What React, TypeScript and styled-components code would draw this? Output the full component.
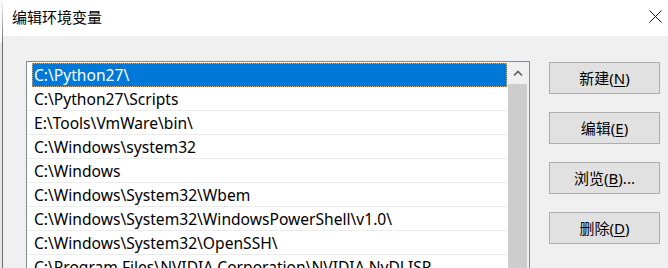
import * as React from 'react';
import styled, { createGlobalStyle } from 'styled-components';

const paths: string[] = [
	'C:\\Python27\\',
	'C:\\Python27\\Scripts',
	'E:\\Tools\\VmWare\\bin\\',
	'C:\\Windows\\system32',
	'C:\\Windows',
	'C:\\Windows\\System32\\Wbem',
	'C:\\Windows\\System32\\WindowsPowerShell\\v1.0\\',
	'C:\\Windows\\System32\\OpenSSH\\',
	'C:\\Program Files\\NVIDIA Corporation\\NVIDIA NvDLISR',
];

const buttons: Array<[string, string, string]> = [
	['新建(', 'N', ')'],
	['编辑(', 'E', ')'],
	['浏览(', 'B', ')...'],
	['删除(', 'D', ')'],
];

const App: React.FC = () => {
	return (
		<>
			<GlobalStyle />
			<Frame>
				<BackStrip />
				<Dialog>
					<TitleBar>
						<Title>编辑环境变量</Title>
						<svg width="13" height="13" viewBox="0 0 13 13">
							<path d="M0.5 0.5 L12.5 12.5 M12.5 0.5 L0.5 12.5" stroke="#111" strokeWidth="1" fill="none" />
						</svg>
					</TitleBar>
					<Body>
						<ListBox>
							<Rows>
								{paths.map((p, i) => (
									<Row key={p} $selected={i === 0}>{p}</Row>
								))}
							</Rows>
							<ScrollBar>
								<ArrowUp>
									<svg width="10" height="6" viewBox="0 0 10 6">
										<path d="M1 5.5 L5 1.5 L9 5.5" stroke="#606060" strokeWidth="1.6" fill="none" />
									</svg>
								</ArrowUp>
								<Thumb />
							</ScrollBar>
						</ListBox>
						<ButtonColumn>
							{buttons.map(([a, key, b]) => (
								<Button key={key}>
									{a}<u>{key}</u>{b}
								</Button>
							))}
						</ButtonColumn>
					</Body>
				</Dialog>
			</Frame>
		</>
	);
};

export default App;

const GlobalStyle = createGlobalStyle`
	html, body {
		margin: 0;
		padding: 0;
		overflow: hidden;
	}
	body {
		font-family: "Noto Sans", "Noto Sans CJK SC", sans-serif;
	}
`;

const Frame = styled.div`
	display: flex;
	width: 668px;
	height: 268px;
	overflow: hidden;
`;

const BackStrip = styled.div`
	width: 2px;
	flex-shrink: 0;
	background: #e6e6e6;
	border-right: 1px solid #6e6e6e;
	border-top: 43px solid #fafafa;
`;

const Dialog = styled.div`
	flex: 1;
	display: flex;
	flex-direction: column;
	min-width: 0;
`;

const TitleBar = styled.div`
	height: 36px;
	flex-shrink: 0;
	box-sizing: border-box;
	padding: 0 6px 3px 9px;
	background: #fff;
	display: flex;
	align-items: center;
	justify-content: space-between;
`;

const Title = styled.div`
	font-family: "Noto Sans CJK SC", sans-serif;
	font-size: 15px;
	color: #000;
`;

const Body = styled.div`
	flex: 1;
	display: flex;
	align-items: flex-start;
	gap: 19px;
	padding: 25px 0 0 23px;
	background: #f0f0f0;
	overflow: hidden;
`;

const ListBox = styled.div`
	width: 504px;
	height: 260px;
	flex-shrink: 0;
	box-sizing: border-box;
	display: flex;
	border: 1px solid #828790;
	background: #fff;
`;

const Rows = styled.div`
	flex: 1;
	padding: 1px 0 0 1px;
	overflow: hidden;
`;

const Row = styled.div<{ $selected?: boolean }>`
	height: 24px;
	box-sizing: border-box;
	display: flex;
	align-items: center;
	margin-left: ${(p) => (p.$selected ? '4px' : '0')};
	padding-left: ${(p) => (p.$selected ? '2px' : '6px')};
	border-bottom: 1px solid ${(p) => (p.$selected ? '#0078d7' : '#ececec')};
	background: ${(p) => (p.$selected ? '#0078d7' : '#fff')};
	color: ${(p) => (p.$selected ? '#fff' : '#000')};
	outline: ${(p) => (p.$selected ? '1px dotted #f0a050' : 'none')};
	outline-offset: -1px;
	font-family: "Noto Sans", "Noto Sans CJK SC", sans-serif;
	font-size: 15.6px;
	white-space: nowrap;
`;

const ScrollBar = styled.div`
	width: 21px;
	flex-shrink: 0;
	display: flex;
	flex-direction: column;
	background: #f0f0f0;
	margin-left: 1px;
`;

const ArrowUp = styled.div`
	height: 22px;
	display: flex;
	align-items: center;
	justify-content: center;
	padding-right: 2px;
`;

const Thumb = styled.div`
	flex: 1;
	width: 19px;
	background: #cdcdcd;
`;

const ButtonColumn = styled.div`
	display: flex;
	flex-direction: column;
	gap: 18px;
	padding-top: 1px;
`;

const Button = styled.button`
	width: 111px;
	height: 32px;
	box-sizing: border-box;
	padding: 0;
	border: 1px solid #adadad;
	background: #e1e1e1;
	color: #000;
	font-family: "Noto Sans", "Noto Sans CJK SC", sans-serif;
	font-size: 15px;
	line-height: 1;
	u {
		text-underline-offset: 2px;
	}
`;
